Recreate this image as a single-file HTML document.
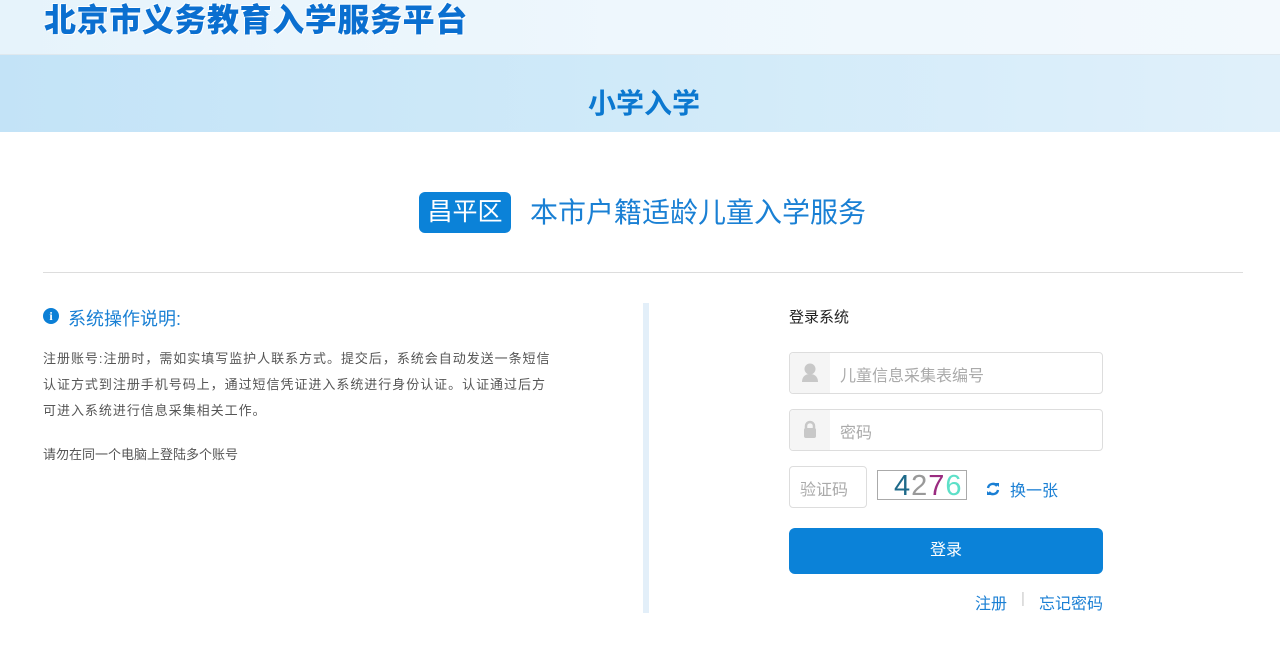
<!DOCTYPE html>
<html><head><meta charset="utf-8"><style>
body{margin:0;width:1280px;height:658px;overflow:hidden;background:#fff;font-family:"Liberation Sans","Noto Sans CJK SC",sans-serif;position:relative}
.a{position:absolute}
.top{left:0;top:0;width:1280px;height:54px;background:linear-gradient(90deg,#e6f3fb,#eef7fd 50%,#f3f9fd);border-bottom:1px solid #dfe8ee}
.ban{left:0;top:55px;width:1280px;height:77px;background:linear-gradient(90deg,#c3e3f7,#d0eaf9 50%,#e0f0fa)}
.logo{left:44px;top:-5px;font-size:32px;font-weight:900;color:#0a6fd0;letter-spacing:0.6px;text-shadow:1px 1px 0 #fff,-1px -1px 0 #fff;white-space:nowrap}
.sub{left:4px;width:1280px;text-align:center;top:82px;font-size:28px;font-weight:bold;color:#0b78d0}
.inp{border:1px solid #ddd;border-radius:4px;background:#fff;box-sizing:border-box}
.ic{left:0;top:0;width:40px;height:100%;background:#f5f5f5;border-radius:4px 0 0 4px}
.ph{color:#aaa;font-size:16px}
</style></head><body>
<div class="a top"></div>
<div class="a ban"></div>
<div class="a logo">北京市义务教育入学服务平台</div>
<div class="a sub">小学入学</div>
<div class="a" style="left:419px;top:192px;width:92px;height:41px;background:#0b82d8;border-radius:6px;color:#fff;font-size:25px;line-height:41px;text-align:center">昌平区</div>
<div class="a" style="left:530px;top:193px;font-size:28px;color:#1a80d4;line-height:40px">本市户籍适龄儿童入学服务</div>
<div class="a" style="left:43px;top:272px;width:1200px;height:1px;background:#ddd"></div>
<div class="a" style="left:43px;top:308px;width:16px;height:16px;border-radius:50%;background:#0b7fd6;color:#fff;font-size:12px;font-weight:bold;text-align:center;line-height:16px;font-family:'Liberation Serif',serif">i</div>
<div class="a" style="left:68px;top:305px;font-size:18px;color:#1a80d4">系统操作说明:</div>
<div class="a" style="left:43px;top:346px;white-space:nowrap;font-size:13px;letter-spacing:0.97px;color:#555;line-height:26px">注册账号:注册时，需如实填写监护人联系方式。提交后，系统会自动发送一条短信<br>认证方式到注册手机号码上，通过短信凭证进入系统进行身份认证。认证通过后方<br>可进入系统进行信息采集相关工作。</div>
<div class="a" style="left:43px;top:443px;font-size:13px;color:#555;line-height:24px">请勿在同一个电脑上登陆多个账号</div>
<div class="a" style="left:643px;top:303px;width:6px;height:310px;background:#e3eff9"></div>
<div class="a" style="left:789px;top:306px;font-size:15px;color:#222">登录系统</div>
<div class="a inp" style="left:789px;top:352px;width:314px;height:42px"><div class="a ic"><svg width="40" height="40" viewBox="0 0 40 40"><circle cx="20" cy="16" r="5.5" fill="#c8c8c8"/><path d="M12 29c0-6 4-8 8-8s8 2 8 8z" fill="#c8c8c8"/></svg></div><div class="a ph" style="left:50px;top:9px">儿童信息采集表编号</div></div>
<div class="a inp" style="left:789px;top:409px;width:314px;height:42px"><div class="a ic"><svg width="40" height="40" viewBox="0 0 40 40"><path d="M16 19v-3a4 4 0 0 1 8 0v3" stroke="#c8c8c8" stroke-width="2.5" fill="none"/><rect x="14" y="18" width="12" height="10" rx="2" fill="#c8c8c8"/></svg></div><div class="a ph" style="left:50px;top:9px">密码</div></div>
<div class="a inp" style="left:789px;top:466px;width:78px;height:42px"><div class="a ph" style="left:10px;top:9px">验证码</div></div>
<div class="a" style="left:877px;top:470px;width:88px;height:28px;border:1px solid #aaa;background:#fff;font-size:29px;line-height:30px;letter-spacing:1px;white-space:nowrap"><span style="margin-left:16px;color:#1e6a8a">4</span><span style="color:#999">2</span><span style="color:#9a2b80">7</span><span style="color:#5de0c8">6</span></div>
<svg class="a" style="left:986px;top:482px" width="14" height="14" viewBox="0 0 14 14"><path d="M2 6A5 5 0 0 1 11 4" stroke="#1a7fd4" stroke-width="2.4" fill="none"/><path d="M9 1l4 0 0 4z" fill="#1a7fd4"/><path d="M12 8A5 5 0 0 1 3 10" stroke="#1a7fd4" stroke-width="2.4" fill="none"/><path d="M5 13l-4 0 0-4z" fill="#1a7fd4"/></svg>
<div class="a" style="left:1010px;top:477px;color:#1a7fd4;font-size:16px">换一张</div>
<div class="a" style="left:789px;top:528px;width:314px;height:46px;background:#0b82d8;border-radius:6px;color:#fff;font-size:16px;text-align:center;line-height:46px">登录</div>
<div class="a" style="left:975px;top:590px;color:#1a7fd4;font-size:16px">注册</div>
<div class="a" style="left:1021px;top:590px;color:#ccc;font-size:15px">|</div>
<div class="a" style="left:1039px;top:590px;color:#1a7fd4;font-size:16px">忘记密码</div>
</body></html>
